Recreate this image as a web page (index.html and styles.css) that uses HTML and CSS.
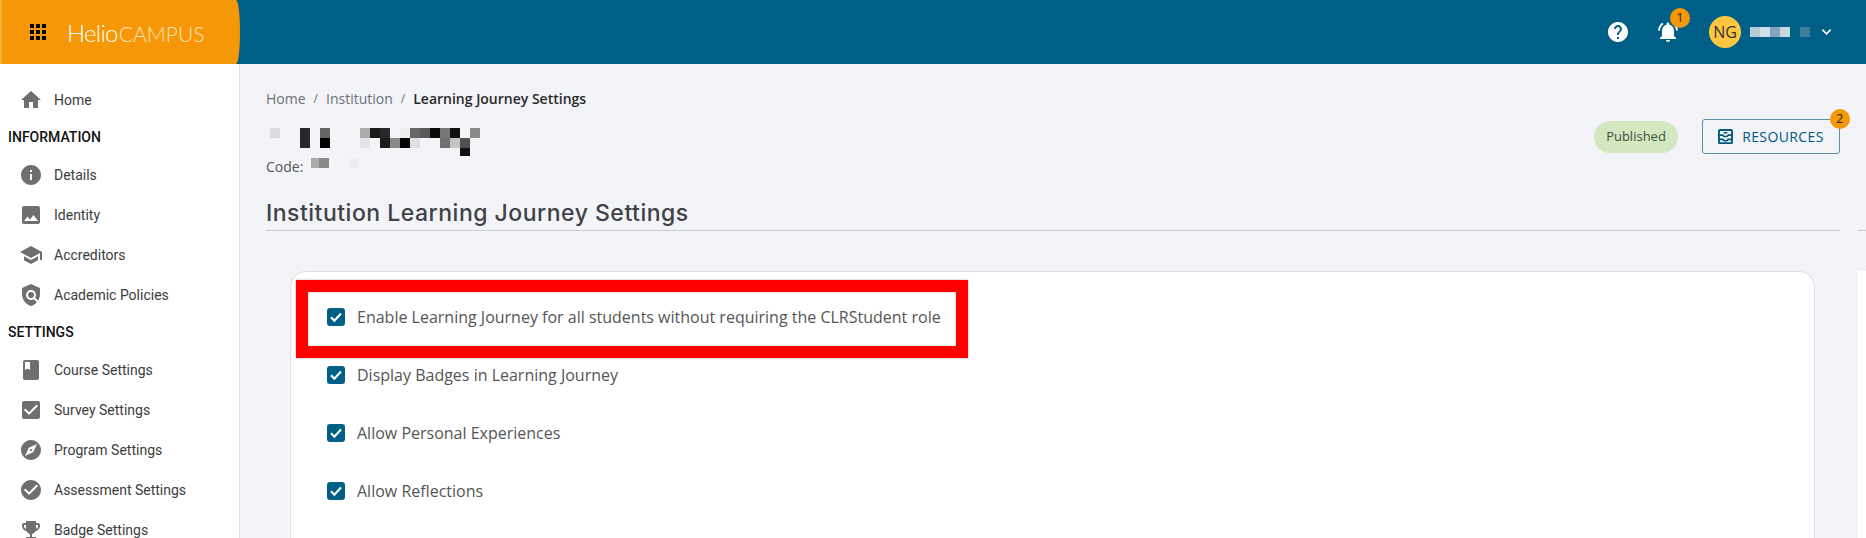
FILE: index.html
```html
<!DOCTYPE html>
<html lang="en">
<head>
<meta charset="utf-8">
<title>Learning Journey Settings</title>
<link rel="stylesheet" href="styles.css">
</head>
<body>
<header class="topbar">
  <div class="brand">
    <svg class="apps" viewBox="0 0 16 16"><path d="M0 0h4v4H0zM6 0h4v4H6zM12 0h4v4h-4zM0 6h4v4H0zM6 6h4v4H6zM12 6h4v4h-4zM0 12h4v4H0zM6 12h4v4H6zM12 12h4v4h-4z"/></svg>
    <div class="logo"><span class="logo-a">Helio</span><span class="logo-b">CAMPUS</span></div>
  </div>
  <div class="top-actions">
    <svg class="top-icon" viewBox="0 0 24 24"><path d="M12 2C6.48 2 2 6.48 2 12s4.48 10 10 10 10-4.48 10-10S17.52 2 12 2zm1 17h-2v-2h2v2zm2.07-7.75l-.9.92C13.45 12.9 13 13.5 13 15h-2v-.5c0-1.1.45-2.1 1.17-2.83l1.24-1.26c.37-.36.59-.86.59-1.41 0-1.1-.9-2-2-2s-2 .9-2 2H8c0-2.21 1.79-4 4-4s4 1.79 4 4c0 .88-.36 1.68-.93 2.25z"/></svg>
    <div class="bell">
      <svg class="top-icon" viewBox="0 0 24 24"><path d="M7.58 4.08L6.15 2.65C3.75 4.48 2.17 7.3 2.03 10.5h2c.15-2.65 1.51-4.97 3.55-6.42zm12.39 6.42h2c-.15-3.2-1.73-6.02-4.12-7.85l-1.42 1.43c2.02 1.45 3.39 3.77 3.54 6.42zM18 11c0-3.07-1.64-5.64-4.5-6.32V4c0-.83-.67-1.5-1.5-1.5s-1.5.67-1.5 1.5v.68C7.63 5.36 6 7.92 6 11v5l-2 2v1h16v-1l-2-2v-5zm-6 11c.14 0 .27-.01.4-.04.65-.14 1.18-.58 1.44-1.18.1-.24.15-.5.15-.78h-4c.01 1.1.9 2 2.01 2z"/></svg>
      <span class="badge badge-bell">1</span>
    </div>
    <div class="avatar">NG</div>
    <svg class="user-blur" viewBox="0 0 60 10" shape-rendering="crispEdges"><rect x="0" width="10" height="10" fill="#b7cbd9"/><rect x="10" width="10" height="10" fill="#d0dee7"/><rect x="20" width="10" height="10" fill="#7fa4bb"/><rect x="30" width="10" height="10" fill="#c6d7e1"/><rect x="50" width="10" height="10" fill="#3f7e9f"/></svg>
    <svg class="chev" viewBox="0 0 12 8"><path d="M1.5 1.5L6 6l4.5-4.5" fill="none" stroke="#fff" stroke-width="1.8"/></svg>
  </div>
</header>
<div class="layout">
  <nav class="sidebar">
    <a class="nav-item nav-first"><svg viewBox="0 0 24 24"><path d="M10 20v-6h4v6h5v-8h3L12 3 2 12h3v8z"/></svg>Home</a>
    <div class="nav-title">INFORMATION</div>
    <a class="nav-item"><svg viewBox="0 0 24 24"><path d="M12 2C6.48 2 2 6.48 2 12s4.48 10 10 10 10-4.48 10-10S17.52 2 12 2zm1 15h-2v-6h2v6zm0-8h-2V7h2v2z"/></svg>Details</a>
    <a class="nav-item"><svg viewBox="0 0 24 24"><path d="M21 19V5c0-1.1-.9-2-2-2H5c-1.1 0-2 .9-2 2v14c0 1.1.9 2 2 2h14c1.1 0 2-.9 2-2zM8.5 13.5l2.5 3.01L14.5 12l4.5 6H5l3.5-4.5z"/></svg>Identity</a>
    <a class="nav-item"><svg viewBox="0 0 24 24"><path d="M5 13.18v4L12 21l7-3.82v-4L12 17l-7-3.82zM12 3L1 9l11 6 9-4.91V17h2V9L12 3z"/></svg>Accreditors</a>
    <a class="nav-item"><svg viewBox="0 0 24 24"><path fill-rule="evenodd" d="M12 1L3 5v6c0 5.55 3.84 10.74 9 12 2.3-.56 4.33-1.9 5.88-3.71l-3.12-3.12c-1.94 1.29-4.58 1.07-6.29-.64-1.95-1.95-1.95-5.12 0-7.07 1.95-1.95 5.12-1.95 7.07 0 1.71 1.71 1.92 4.35.64 6.29l2.9 2.9C20.29 15.69 21 13.38 21 11V5l-9-4z"/><circle cx="12" cy="12" r="3"/></svg>Academic Policies</a>
    <div class="nav-title">SETTINGS</div>
    <a class="nav-item"><svg viewBox="0 0 24 24"><path d="M18 2H6c-1.1 0-2 .9-2 2v16c0 1.1.9 2 2 2h12c1.1 0 2-.9 2-2V4c0-1.1-.9-2-2-2zM6 4h5v8l-2.5-1.5L6 12V4z"/></svg>Course Settings</a>
    <a class="nav-item"><svg viewBox="0 0 24 24"><path d="M19 3H5c-1.11 0-2 .9-2 2v14c0 1.1.89 2 2 2h14c1.11 0 2-.9 2-2V5c0-1.1-.89-2-2-2zm-9 14l-5-5 1.41-1.41L10 14.17l7.59-7.59L19 8l-9 9z"/></svg>Survey Settings</a>
    <a class="nav-item"><svg viewBox="0 0 24 24"><path d="M12 10.9c-.61 0-1.1.49-1.1 1.1s.49 1.1 1.1 1.1c.61 0 1.1-.49 1.1-1.1s-.49-1.1-1.1-1.1zM12 2C6.48 2 2 6.48 2 12s4.48 10 10 10 10-4.48 10-10S17.52 2 12 2zm2.19 12.19L6 18l3.81-8.19L18 6l-3.81 8.19z"/></svg>Program Settings</a>
    <a class="nav-item"><svg viewBox="0 0 24 24"><path d="M12 2C6.48 2 2 6.48 2 12s4.48 10 10 10 10-4.48 10-10S17.52 2 12 2zm-2 15l-5-5 1.41-1.41L10 14.17l7.59-7.59L19 8l-9 9z"/></svg>Assessment Settings</a>
    <a class="nav-item"><svg viewBox="0 0 24 24"><path d="M19 5h-2V3H7v2H5c-1.1 0-2 .9-2 2v1c0 2.55 1.92 4.63 4.39 4.94.63 1.5 1.98 2.63 3.61 2.96V19H7v2h10v-2h-4v-3.1c1.63-.33 2.98-1.46 3.61-2.96C19.08 12.63 21 10.55 21 8V7c0-1.1-.9-2-2-2zM5 8V7h2v3.82C5.84 10.4 5 9.3 5 8zm14 0c0 1.3-.84 2.4-2 2.82V7h2v1z"/></svg>Badge Settings</a>
  </nav>
  <main class="main">
    <div class="content">
      <div class="crumbs"><span>Home</span><i>/</i><span>Institution</span><i>/</i><b>Learning Journey Settings</b></div>
      <div class="page-head">
        <div class="page-id">
          <svg class="name-blur" viewBox="0 0 214 28" shape-rendering="crispEdges">
            <rect x="4" y="0" width="10" height="10" fill="#dcdcdf"/><rect x="34" y="0" width="10" height="20" fill="#282828"/><rect x="54" y="0" width="10" height="10" fill="#666"/><rect x="54" y="10" width="10" height="10" fill="#000"/><rect x="94" y="0" width="10" height="10" fill="#aaa"/><rect x="104" y="0" width="10" height="10" fill="#1a1a1a"/><rect x="114" y="0" width="10" height="10" fill="#282828"/><rect x="134" y="0" width="10" height="10" fill="#eee"/><rect x="144" y="0" width="10" height="10" fill="#666"/><rect x="154" y="0" width="10" height="10" fill="#5a5a5a"/><rect x="164" y="0" width="10" height="10" fill="#0a0a0a"/><rect x="174" y="0" width="10" height="10" fill="#777"/><rect x="184" y="0" width="10" height="10" fill="#111"/><rect x="204" y="0" width="10" height="10" fill="#888"/><rect x="94" y="10" width="10" height="10" fill="#e4e4e8"/><rect x="114" y="10" width="10" height="10" fill="#1c1c1c"/><rect x="124" y="10" width="10" height="10" fill="#888"/><rect x="134" y="10" width="10" height="10" fill="#050505"/><rect x="144" y="10" width="10" height="10" fill="#e0e0e2"/><rect x="174" y="10" width="10" height="10" fill="#707070"/><rect x="184" y="10" width="10" height="10" fill="#c4c4c4"/><rect x="194" y="10" width="10" height="10" fill="#505050"/><rect x="194" y="20" width="10" height="8" fill="#111"/>
          </svg>
          <div class="code"><span>Code:</span><svg class="code-blur" viewBox="0 0 48 10" shape-rendering="crispEdges"><rect width="8" height="10" fill="#aaa"/><rect x="8" width="10" height="10" fill="#888"/><rect x="38" width="10" height="10" fill="#eeeef1"/></svg></div>
        </div>
        <div class="page-tools">
          <span class="pill">Published</span>
          <button class="res-btn">
            <svg viewBox="0 0 16 16"><rect x="1" y="1" width="14" height="14" rx="1" fill="none" stroke="#00587f" stroke-width="2"/><path d="M1 6.5h4l1.5 1.5h3L11 6.5h4M1 11h4l1.5 1.5h3L11 11h4" fill="none" stroke="#00587f" stroke-width="1.8"/><path d="M6 4h4" stroke="#00587f" stroke-width="1.6"/></svg>
            RESOURCES
            <span class="badge badge-res">2</span>
          </button>
        </div>
      </div>
      <h1 class="heading">Institution Learning Journey Settings</h1>
      <section class="card">
        <div class="callout"></div>
        <label class="check"><span class="box"><svg viewBox="0 0 18 18"><path d="M4 9.3l3.4 3.4L14 5.6" fill="none" stroke="#fff" stroke-width="2.2"/></svg></span>Enable Learning Journey for all students without requiring the CLRStudent role</label>
        <label class="check"><span class="box"><svg viewBox="0 0 18 18"><path d="M4 9.3l3.4 3.4L14 5.6" fill="none" stroke="#fff" stroke-width="2.2"/></svg></span>Display Badges in Learning Journey</label>
        <label class="check"><span class="box"><svg viewBox="0 0 18 18"><path d="M4 9.3l3.4 3.4L14 5.6" fill="none" stroke="#fff" stroke-width="2.2"/></svg></span>Allow Personal Experiences</label>
        <label class="check"><span class="box"><svg viewBox="0 0 18 18"><path d="M4 9.3l3.4 3.4L14 5.6" fill="none" stroke="#fff" stroke-width="2.2"/></svg></span>Allow Reflections</label>
      </section>
    </div>
    <aside class="rail"><div class="rail-panel"></div></aside>
  </main>
</div>
</body>
</html>
```
FILE: styles.css
```css
* { box-sizing: border-box; }
html, body { margin: 0; height: 538px; overflow: hidden; }
body { font-family: "Open Sans", sans-serif; background: #f2f4f8; color: #555; }

.topbar { height: 64px; background: #005f87; display: flex; align-items: center; justify-content: space-between; }
.brand { width: 240px; height: 64px; background: #f59707; border-radius: 0 4px 4px 0 / 0 50% 50% 0; border-left: 2px solid #f9ae3c; display: flex; align-items: center; padding-left: 28px; }
.apps { width: 16px; height: 16px; fill: #000; }
.logo { margin-left: 21px; color: #fff; font-family: Lato, sans-serif; white-space: nowrap; display: flex; align-items: baseline; }
.logo-a { font-size: 24px; font-weight: 300; letter-spacing: -0.7px; }
.logo-b { font-size: 21px; font-weight: 300; letter-spacing: 0; margin-left: 1px; color: #fde3bd; }

.top-actions { display: flex; align-items: center; padding-right: 34px; }
.top-icon { width: 24px; height: 24px; fill: #fff; display: block; }
.bell { position: relative; margin-left: 26px; }
.badge { position: absolute; width: 20px; height: 20px; border-radius: 50%; background: #f59707; color: #222; font-size: 12px; line-height: 20px; text-align: center; font-family: "Open Sans", sans-serif; }
.badge-bell { top: -12px; left: 14px; }
.badge-res { top: -11px; right: -11px; }
.avatar { width: 32px; height: 32px; border-radius: 50%; background: #fcc73f; color: #333; font-size: 16px; line-height: 32px; text-align: center; margin-left: 29px; }
.user-blur { width: 60px; height: 10px; margin-left: 9px; display: block; }
.chev { width: 11px; height: 8px; margin-left: 11px; display: block; }

.layout { display: flex; height: 474px; }
.sidebar { width: 240px; flex: none; background: #fff; border-right: 1px solid #e1e3e9; padding-top: 16px; font-family: Roboto, sans-serif; overflow: hidden; }
.nav-item { display: flex; align-items: center; height: 40px; padding-left: 19px; font-size: 14px; color: #3c3c3c; }
.nav-item svg { width: 24px; height: 24px; fill: #6f6f6f; margin-right: 11px; flex: none; }
.nav-title { height: 35px; padding-left: 8px; font-size: 14px; line-height: 35px; font-weight: 500; color: #111; }

.main { flex: 1; min-width: 0; display: flex; }
.content { flex: 1; min-width: 0; padding: 25px 0 0 26px; }
.crumbs { height: 20px; font-size: 14px; line-height: 20px; color: #6b6f76; display: flex; align-items: center; }
.crumbs i { font-style: normal; font-size: 12px; margin: 0 8px; }
.crumbs b { font-weight: 600; color: #2a2a2a; }

.page-head { display: flex; justify-content: space-between; margin-top: 10px; height: 58px; }
.page-id { padding-top: 9px; }
.name-blur { width: 214px; height: 28px; display: block; }
.code { display: flex; align-items: flex-start; height: 20px; font-size: 14px; line-height: 20px; color: #555; margin-top: 1px; }
.code-blur { width: 48px; height: 10px; margin-left: 8px; margin-top: 1px; display: block; }
.page-tools { display: flex; align-items: flex-start; }
.pill { margin-top: 2px; width: 84px; height: 32px; border-radius: 16px; background: #d3e8c1; color: #3c5140; font-size: 13px; line-height: 31px; text-align: center; }
.res-btn { position: relative; margin-left: 24px; width: 138px; height: 35px; padding: 0; border: 1px solid #5f8ea9; border-radius: 3px; background: transparent; color: #00587f; font-family: "Open Sans", sans-serif; font-size: 14px; letter-spacing: 0.4px; display: flex; align-items: center; justify-content: center; gap: 9px; }
.res-btn svg { width: 15px; height: 15px; display: block; }

.heading { margin: 19px 0 0; height: 35px; border-bottom: 1px solid #c9ccd2; font-family: Inter, sans-serif; font-size: 23px; line-height: 34px; font-weight: 500; letter-spacing: 0.5px; color: #404247; }

.card { position: relative; margin: 40px 25px 0 24px; height: 267px; background: #fff; border: 1px solid #dcdfe4; border-bottom: 0; border-radius: 16px 16px 0 0; padding: 16px 0 0 36px; }
.callout { position: absolute; left: 5px; top: 8px; width: 672px; height: 78px; border: 12px solid #f00; box-shadow: 0 0 2px rgba(0,0,0,.35), inset 0 0 2px rgba(0,0,0,.35); }
.check { position: relative; display: flex; align-items: center; height: 58px; font-size: 16px; color: #555; }
.box { width: 18px; height: 18px; border-radius: 3px; background: #005f87; margin-right: 12px; flex: none; }
.box svg { width: 18px; height: 18px; display: block; }

.rail { width: 8px; flex: none; margin-left: 18px; padding-top: 166px; }
.rail-panel { height: 308px; border-top: 1px solid #c9ccd2; }
.rail-panel::after { content: ""; display: block; margin-top: 40px; height: 267px; background: #fff; }
```
